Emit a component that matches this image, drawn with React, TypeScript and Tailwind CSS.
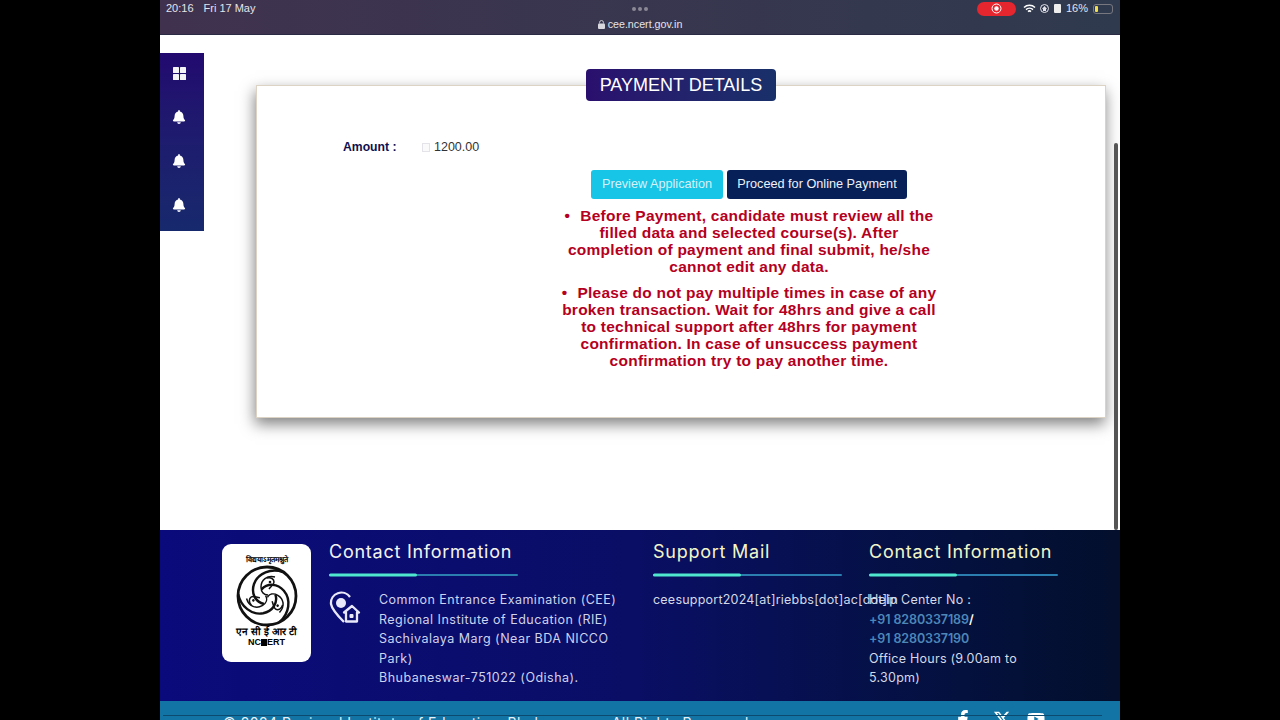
import { FaBell, FaFacebookF, FaYoutube } from "react-icons/fa";
import { FaXTwitter } from "react-icons/fa6";

const footerFont = "font-['Inter',sans-serif]";

function StatusBar() {
  return (
    <div className="h-[35px] shrink-0 bg-gradient-to-r from-[#40324f] to-[#2f3a4e] border-b border-[#2a2a44] px-[6px] text-[#e4e4ea] font-['Liberation_Sans',sans-serif] relative">
      <div className="flex items-center justify-between h-[17px]">
        <div className="text-[11px] flex gap-[10px]">
          <span>20:16</span>
          <span>Fri 17 May</span>
        </div>
        <div className="flex items-center text-[11px]">
          <div className="w-[39px] h-[14px] rounded-full bg-[#e5262f] flex items-center justify-center mr-[7px]">
            <svg width="11" height="11" viewBox="0 0 11 11">
              <circle cx="5.5" cy="5.5" r="4.5" fill="none" stroke="#fff" strokeWidth="1" />
              <circle cx="5.5" cy="5.5" r="2.2" fill="#fff" />
            </svg>
          </div>
          <svg width="13" height="10" viewBox="0 0 13 10" className="mr-[3px]" fill="none" stroke="#fff" strokeWidth="1.5">
            <path d="M1 3.5a8 8 0 0 1 11 0" />
            <path d="M3 5.6a5 5 0 0 1 7 0" />
            <path d="M5 7.6a2.2 2.2 0 0 1 3 0" />
          </svg>
          <svg width="11" height="11" viewBox="0 0 11 11" className="mr-[4px]">
            <circle cx="5.5" cy="5.5" r="4" fill="none" stroke="#e4e4ea" strokeWidth="1" />
            <path d="M5.5 3 8 6H3z M4 6h3v2H4z" fill="#e4e4ea" />
          </svg>
          <div className="w-[7px] h-[9px] bg-[#eee] rounded-[1px] mr-[5px]" />
          <span className="mr-[5px]">16%</span>
          <div className="w-[20px] h-[10px] rounded-[3px] border border-[#77787f] p-[1px] mr-[1px]">
            <div className="w-[3px] h-full bg-[#f4e04a] rounded-[1px]" />
          </div>
        </div>
      </div>
      <div className="text-center text-[10.7px] leading-none mt-[2px] flex items-center justify-center gap-[3px]">
        <svg width="7" height="9" viewBox="0 0 7 9" fill="#d8d8de">
          <rect x="0" y="3.5" width="7" height="5.5" rx="1" />
          <path d="M1.6 3.5V2.4a1.9 1.9 0 0 1 3.800 0v1.100" fill="none" stroke="#d8d8de" strokeWidth="0.9" />
        </svg>
        cee.ncert.gov.in
      </div>
      <div className="absolute top-[7px] left-1/2 -translate-x-1/2 flex gap-[2px]">
        <span className="w-[4px] h-[4px] rounded-full bg-[#8c8895]" />
        <span className="w-[4px] h-[4px] rounded-full bg-[#8c8895]" />
        <span className="w-[4px] h-[4px] rounded-full bg-[#8c8895]" />
      </div>
    </div>
  );
}

function Sidebar() {
  return (
    <div className="w-[44px] h-[178px] mt-[18px] shrink-0 bg-gradient-to-b from-[#22096f] to-[#17296d] flex flex-col items-center pt-[14px] pr-[6px] gap-[30px] text-white">
      <svg width="13" height="13" viewBox="0 0 13 13" fill="#f3f3f8">
        <rect width="6" height="6" rx="0.6" />
        <rect x="7" width="6" height="6" rx="0.6" />
        <rect y="7" width="6" height="6" rx="0.6" />
        <rect x="7" y="7" width="6" height="6" rx="0.6" />
      </svg>
      <FaBell size={14} />
      <FaBell size={14} />
      <FaBell size={14} />
    </div>
  );
}

function PaymentCard() {
  return (
    <div className="relative w-[850px] h-[333px] ml-[52px] mt-[50px] bg-white border border-[#dcd3c5] shadow-[-1px_6px_14px_rgba(0,0,0,0.5)] font-['Liberation_Sans',sans-serif]">
      <div className="absolute -top-[17px] left-[329px] w-[190px] h-[32px] rounded-[4px] bg-gradient-to-r from-[#2a0f6e] to-[#18306a] text-white text-[18px] flex items-center justify-center">
        PAYMENT DETAILS
      </div>
      <div className="flex items-center pt-[52px] pl-[86px]">
        <span className="w-[79px] text-[12.2px] font-bold text-[#10104f]">Amount :</span>
        <span className="w-[8px] h-[9px] border border-[#e4e4e8] bg-[#fafafa] mr-[4px]" />
        <span className="text-[12.5px] text-[#333]">1200.00</span>
      </div>
      <div className="flex gap-[4px] pl-[334px] mt-[13px] text-[12.7px]">
        <button className="w-[132px] h-[29px] rounded-[3px] bg-[#17c5e6] text-[#d5f1f8]">Preview Application</button>
        <button className="w-[180px] h-[29px] rounded-[3px] bg-[#072058] text-[#eef1f8]">Proceed for Online Payment</button>
      </div>
      <div className="w-[384px] ml-[300px] mt-[8px] text-center text-[15.5px] tracking-[0.25px] leading-[17px] font-bold text-[#b5001e]">
        <p>
          <span className="mr-[10px]">•</span>Before Payment, candidate must review all the filled data and selected course(s). After completion of payment and final submit, he/she cannot edit any data.
        </p>
        <p className="mt-[9px]">
          <span className="mr-[10px]">•</span>Please do not pay multiple times in case of any broken transaction. Wait for 48hrs and give a call to technical support after 48hrs for payment confirmation. In case of unsuccess payment confirmation try to pay another time.
        </p>
      </div>
    </div>
  );
}

function FooterHeading({ title, warm }: { title: string; warm?: boolean }) {
  return (
    <div>
      <h3 className={`text-[18px] leading-[22px] tracking-[0.75px] ${warm ? "text-[#f3f6c8]" : "text-[#f4f4ee]"}`}>{title}</h3>
      <div className="mt-[11px] w-[189px] h-[2px] bg-[#2a7fb0] rounded-full">
        <div className="w-[88px] h-[3px] -translate-y-[0.5px] bg-[#4fe8cf] rounded-full" />
      </div>
    </div>
  );
}

function SwirlArm({ angle }: { angle: number }) {
  return (
    <g transform={`rotate(${angle} 31 31)`}>
      <path d="M47 7C35 3 22 8 18 19c-3 9 1 18 10 20" strokeWidth="2.4" />
      <path d="M39 12C31 10 25 15 25 22c0 5 3 8 7 8" strokeWidth="1.5" />
      <path d="M31 13c4-1 7 1 7 4 0 3-3 4-5 7" strokeWidth="1.5" />
      <circle cx="34" cy="17" r="1.3" fill="#111" stroke="none" />
    </g>
  );
}

function Logo() {
  return (
    <div className="w-[89px] h-[118px] mt-[3px] rounded-[9px] bg-white shrink-0 flex flex-col items-center pt-[12px] text-black font-['Liberation_Sans',sans-serif] font-bold">
      <div className="text-[7.5px] leading-[8px]">विद्ययाऽमृतमश्नुते</div>
      <svg width="62" height="62" viewBox="0 0 62 62" fill="none" stroke="#111" className="mt-[1px]">
        <circle cx="31" cy="31" r="29" strokeWidth="2.8" />
        <SwirlArm angle={0} />
        <SwirlArm angle={120} />
        <SwirlArm angle={240} />
      </svg>
      <div className="text-[10px] leading-[11px] -mt-[1px] whitespace-nowrap">एन सी ई आर टी</div>
      <div className="text-[9px] leading-[10px] flex items-center">
        NC<span className="inline-block w-[6px] h-[7px] bg-black" />ERT
      </div>
    </div>
  );
}

function Footer() {
  return (
    <div className={`shrink-0 h-[190px] overflow-hidden ${footerFont}`}>
      <div className="h-[171px] bg-gradient-to-r from-[#0b0a7c] via-[#0a0e64] to-[#030f2c] pl-[62px] pt-[11px] flex text-[12.5px] leading-[19.5px] text-[#cfd3ee]">
        <Logo />
        <div className="w-[324px] ml-[18px] shrink-0">
          <FooterHeading title="Contact Information" />
          <div className="flex mt-[14px]">
            <svg width="32" height="33" viewBox="0 0 32 33" fill="none" stroke="#e8e8fa" strokeWidth="2.3" className="shrink-0 mt-[1px]">
              <path d="M21 6A10.500 10.500 0 0 0 2 13c1 6 7 12 13 18" />
              <circle cx="12" cy="12" r="5" fill="#e8e8fa" stroke="none" />
              <path d="M23 15l7 6.500h-2v9H17v-9h-2z" strokeLinejoin="round" />
              <rect x="20.500" y="23" width="4" height="4" rx="1" fill="#e8e8fa" stroke="none" />
            </svg>
            <p className="ml-[18px] w-[240px] tracking-[0.48px]">
              Common Entrance Examination (CEE)
              <br />
              Regional Institute of Education (RIE)
              <br />
              Sachivalaya Marg (Near BDA NICCO Park)
              <br />
              Bhubaneswar-751022 (Odisha).
            </p>
          </div>
        </div>
        <div className="w-[216px] shrink-0">
          <FooterHeading title="Support Mail" warm />
          <p className="mt-[14px] whitespace-nowrap text-[#d5d9e6] tracking-[0.22px]">ceesupport2024[at]riebbs[dot]ac[dot]in</p>
        </div>
        <div className="w-[190px] shrink-0">
          <FooterHeading title="Contact Information" warm />
          <div className="mt-[14px] text-[#d5d9e6] tracking-[0.25px]">
            <p>Help Center No :</p>
            <p className="font-semibold text-[#4d87b8] tracking-[-0.1px]">
              +91 8280337189<span className="text-white">/</span>
            </p>
            <p className="font-semibold text-[#4d87b8] tracking-[-0.1px]">+91 8280337190</p>
            <p>Office Hours (9.00am to 5.30pm)</p>
          </div>
        </div>
      </div>
      <div className="h-[19px] bg-[#1273a5] pt-[14px]">
        <div className="relative z-10 ml-[3px] mr-[18px] h-[1px] bg-[#0d4a70]" />
        <div className="flex items-start pl-[63px] pr-[75px] text-[14px] leading-[18px] tracking-[0.5px] text-[#e6f2f8]">
          <span className="-mt-[2px] whitespace-nowrap">© 2024 Regional Institute of Education, Bhubaneswar. All Rights Reserved.</span>
          <div className="ml-auto flex gap-[16px] -mt-[6px] text-white">
            <FaFacebookF size={18} className="mr-[5px]" />
            <FaXTwitter size={18} />
            <FaYoutube size={18} />
          </div>
        </div>
      </div>
    </div>
  );
}

export default function App() {
  return (
    <div className="h-[720px] w-[1280px] bg-black flex justify-center overflow-hidden">
      <div className="w-[960px] h-[720px] flex flex-col bg-white relative">
        <StatusBar />
        <main className="flex-1 flex min-h-0">
          <Sidebar />
          <PaymentCard />
        </main>
        <Footer />
        <div className="absolute right-[2px] top-[143px] w-[4px] h-[387px] rounded-full bg-[#555]" />
      </div>
    </div>
  );
}
